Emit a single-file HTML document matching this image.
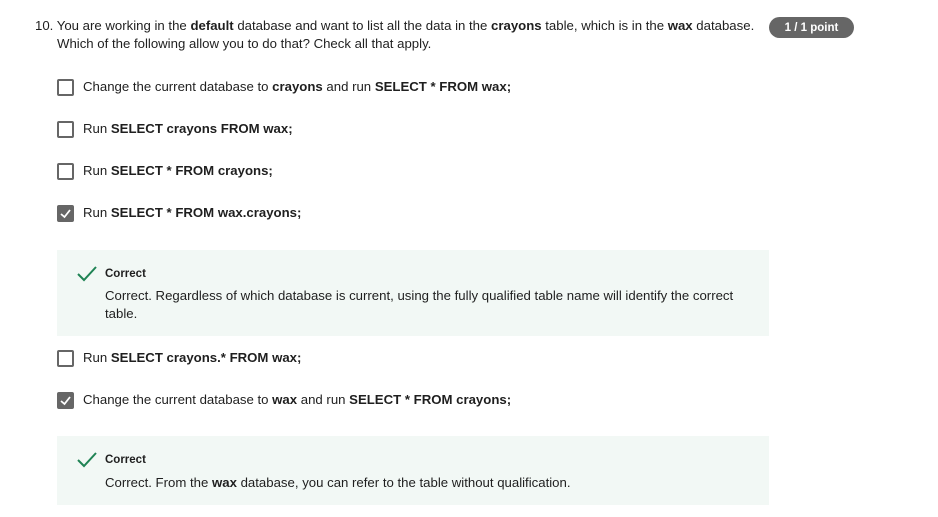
<!DOCTYPE html>
<html><head><style>
body{margin:0;width:938px;height:517px;background:#fff;font-family:"Liberation Sans",sans-serif;color:#1f1f1f;position:relative;overflow:hidden}
.a{position:absolute;font-size:13.2px;white-space:nowrap}
.cb{position:absolute;left:57px;width:13px;height:13px;border:2px solid #666;border-radius:2px;background:#fff}
.cb.on{background:#666;border-color:#666}
.fb{position:absolute;left:57px;width:712px;background:#f2f8f5}
.badge{position:absolute;left:769px;top:17px;width:85px;height:21px;border-radius:11px;background:#666;color:#fff;font-size:11.5px;font-weight:bold;text-align:center;line-height:22px}
b{font-weight:bold}
</style></head><body>
<div class="a" style="left:35px;top:18px">10. You are working in the <b>default</b> database and want to list all the data in the <b>crayons</b> table, which is in the <b>wax</b> database.</div>
<div class="a" style="left:57px;top:36px">Which of the following allow you to do that? Check all that apply.</div>
<div class="badge">1 / 1 point</div>

<div class="cb" style="top:79px"></div><div class="a" style="left:83px;top:79px">Change the current database to <b>crayons</b> and run <b>SELECT * FROM wax;</b></div>
<div class="cb" style="top:121px"></div><div class="a" style="left:83px;top:121px">Run <b>SELECT crayons FROM wax;</b></div>
<div class="cb" style="top:163px"></div><div class="a" style="left:83px;top:163px">Run <b>SELECT * FROM crayons;</b></div>
<div class="cb on" style="top:205px"><svg width="13" height="13" style="display:block"><path d="M2 7 L5.5 10 L11 3" stroke="#fff" stroke-width="1.8" fill="none"/></svg></div><div class="a" style="left:83px;top:205px">Run <b>SELECT * FROM wax.crayons;</b></div>

<div class="fb" style="top:250px;height:86px"></div>
<svg style="position:absolute;left:77px;top:265px" width="20" height="18"><path d="M1 9 L7 15 L19 2" stroke="#1f8354" stroke-width="2" fill="none"/></svg>
<div class="a" style="left:105px;top:268px;font-size:11.5px;font-weight:bold">Correct</div>
<div class="a" style="left:105px;top:288px">Correct. Regardless of which database is current, using the fully qualified table name will identify the correct</div>
<div class="a" style="left:105px;top:306px">table.</div>

<div class="cb" style="top:350px"></div><div class="a" style="left:83px;top:350px">Run <b>SELECT crayons.* FROM wax;</b></div>
<div class="cb on" style="top:392px"><svg width="13" height="13" style="display:block"><path d="M2 7 L5.5 10 L11 3" stroke="#fff" stroke-width="1.8" fill="none"/></svg></div><div class="a" style="left:83px;top:392px">Change the current database to <b>wax</b> and run <b>SELECT * FROM crayons;</b></div>

<div class="fb" style="top:436px;height:69px"></div>
<svg style="position:absolute;left:77px;top:451px" width="20" height="18"><path d="M1 9 L7 15 L19 2" stroke="#1f8354" stroke-width="2" fill="none"/></svg>
<div class="a" style="left:105px;top:454px;font-size:11.5px;font-weight:bold">Correct</div>
<div class="a" style="left:105px;top:475px">Correct. From the <b>wax</b> database, you can refer to the table without qualification.</div>
</body></html>
